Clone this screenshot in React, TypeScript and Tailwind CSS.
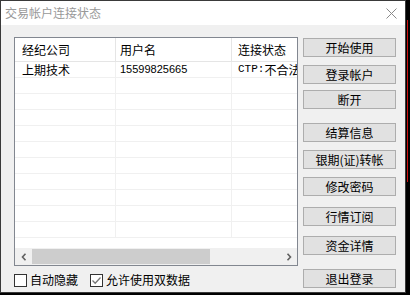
const font = { fontFamily: '"Noto Sans CJK SC", "Microsoft YaHei", sans-serif' };

const buttons: { label: string; mt: string }[] = [
  { label: "开始使用", mt: "mt-[13px]" },
  { label: "登录帐户", mt: "mt-[8px]" },
  { label: "断开", mt: "mt-[6px]" },
  { label: "结算信息", mt: "mt-[14px]" },
  { label: "银期(证)转帐", mt: "mt-[8px]" },
  { label: "修改密码", mt: "mt-[8px]" },
  { label: "行情订阅", mt: "mt-[11px]" },
  { label: "资金详情", mt: "mt-[10px]" },
  { label: "退出登录", mt: "mt-[14px]" },
];

function Checkbox({ checked, label }: { checked?: boolean; label: string }) {
  return (
    <div className="flex items-center">
      <div className="w-[13px] h-[13px] border border-[#333333] bg-white flex items-center justify-center">
        {checked && (
          <svg width="11" height="11" viewBox="0 0 11 11">
            <path d="M1.5 5.5 L4.2 8.2 L9.5 2.5" fill="none" stroke="#777" strokeWidth="1.3" />
          </svg>
        )}
      </div>
      <span className="ml-[3px] text-[12px] leading-[14px] text-black">{label}</span>
    </div>
  );
}

export default function App() {
  const emptyRows = Array.from({ length: 10 });

  return (
    <div className="w-[410px] h-[295px] bg-black relative overflow-hidden" style={font}>
      {/* red line of the desktop behind */}
      <div className="absolute left-[407px] top-[20px] w-[1px] h-[162px] bg-[#d01010]" />

      <div className="w-[406px] h-[293px] border border-[#3a3a3a] bg-[#f0f0f0] flex flex-col">
        {/* title bar */}
        <div className="h-[24px] bg-white flex items-center justify-between pl-[4px] pr-[8px]">
          <span className="text-[12px] text-[#999999]">交易帐户连接状态</span>
          <svg width="11" height="11" viewBox="0 0 11 11">
            <path d="M0.5 0.5 L10.5 10.5 M10.5 0.5 L0.5 10.5" stroke="#8a8a8a" strokeWidth="1" />
          </svg>
        </div>

        <div className="flex flex-1">
          {/* left side */}
          <div className="pl-[13px] pt-[12px] flex flex-col">
            <div className="w-[284px] h-[229px] border border-[#828790] bg-white flex flex-col">
              <div className="flex-1 overflow-hidden">
                <div className="w-[400px]">
                  <div className="flex h-[24px] border-b border-[#e5e5e5] text-[12px] text-black">
                    <div className="w-[101px] border-r border-[#e5e5e5] pl-[7px] flex items-center">经纪公司</div>
                    <div className="w-[116px] border-r border-[#e5e5e5] pl-[4px] flex items-center">用户名</div>
                    <div className="w-[170px] pl-[6px] flex items-center">连接状态</div>
                  </div>
                  <div className="flex h-[16px] border-b border-[#f0f0f0] text-[12px] text-black">
                    <div className="w-[101px] border-r border-[#f0f0f0] pl-[7px] flex items-center">上期技术</div>
                    <div
                      className="w-[116px] border-r border-[#f0f0f0] pl-[4px] flex items-center text-[11px]"
                      style={{ fontFamily: '"Liberation Sans", sans-serif' }}
                    >
                      15599825665
                    </div>
                    <div className="w-[170px] pl-[6px] flex items-center whitespace-nowrap">
                      <span className="text-[11px]" style={{ fontFamily: '"Liberation Mono", monospace' }}>CTP:</span>
                      <span>不合法</span>
                    </div>
                  </div>
                  {emptyRows.map((_, i) => (
                    <div key={i} className="flex h-[16px] border-b border-[#f0f0f0]">
                      <div className="w-[101px] border-r border-[#f0f0f0]" />
                      <div className="w-[116px] border-r border-[#f0f0f0]" />
                      <div className="w-[170px]" />
                    </div>
                  ))}
                </div>
              </div>
              {/* horizontal scrollbar */}
              <div className="h-[17px] bg-[#f0f0f0] flex items-center">
                <div className="w-[17px] h-[17px] flex items-center justify-center">
                  <svg width="6" height="8" viewBox="0 0 6 8">
                    <path d="M4.5 0.8 L1.5 4 L4.5 7.2" fill="none" stroke="#606060" strokeWidth="1.6" />
                  </svg>
                </div>
                <div className="w-[178px] h-[15px] bg-[#cdcdcd]" />
                <div className="flex-1" />
                <div className="w-[17px] h-[17px] flex items-center justify-center">
                  <svg width="6" height="8" viewBox="0 0 6 8">
                    <path d="M1.5 0.8 L4.5 4 L1.5 7.2" fill="none" stroke="#606060" strokeWidth="1.6" />
                  </svg>
                </div>
              </div>
            </div>

            <div className="flex items-center mt-[7px] gap-[12px]">
              <Checkbox label="自动隐藏" />
              <Checkbox checked label="允许使用双数据" />
            </div>
          </div>

          {/* right side buttons */}
          <div className="ml-[5px] flex flex-col">
            {buttons.map((b) => (
              <button
                key={b.label}
                className={`${b.mt} w-[93px] h-[19px] border border-[#adadad] bg-[#e1e1e1] text-[12px] leading-none text-black flex items-center justify-center`}
              >
                {b.label}
              </button>
            ))}
          </div>
        </div>
      </div>
    </div>
  );
}
